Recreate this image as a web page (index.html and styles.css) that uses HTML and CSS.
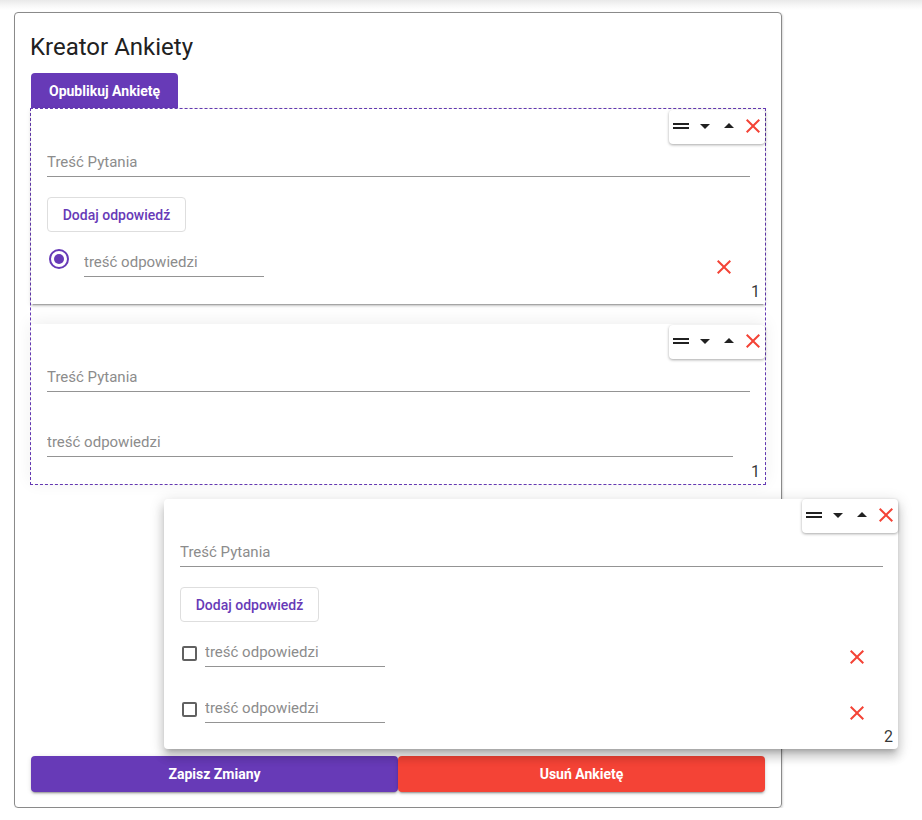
FILE: index.html
```html
<!DOCTYPE html>
<html lang="pl">
<head>
<meta charset="utf-8">
<title>Kreator Ankiety</title>
<link rel="stylesheet" href="styles.css">
</head>
<body>
<div class="topshade"></div>
<div class="panel">
  <h1 class="title">Kreator Ankiety</h1>
  <button class="publish">Opublikuj Ankietę</button>
  <div class="dropzone">
    <div class="qcard">
      <div class="tools">
        <svg class="ic" viewBox="0 0 24 24"><path d="M20 9H4v2h16V9zM4 15h16v-2H4v2z"/></svg>
        <svg class="ic" viewBox="0 0 24 24"><path d="M7 10l5 5 5-5z"/></svg>
        <svg class="ic" viewBox="0 0 24 24"><path d="M7 14l5-5 5 5z"/></svg>
        <svg class="ic red" viewBox="0 0 24 24"><path d="M19 6.41L17.59 5 12 10.59 6.41 5 5 6.41 10.59 12 5 17.59 6.41 19 12 13.41 17.59 19 19 17.59 13.41 12z"/></svg>
      </div>
      <input class="field" placeholder="Treść Pytania">
      <button class="add">Dodaj odpowiedź</button>
      <div class="answer first">
        <span class="radio"><span class="dot"></span></span>
        <input class="field short radio-gap" placeholder="treść odpowiedzi">
        <svg class="ic red del" viewBox="0 0 24 24"><path d="M19 6.41L17.59 5 12 10.59 6.41 5 5 6.41 10.59 12 5 17.59 6.41 19 12 13.41 17.59 19 19 17.59 13.41 12z"/></svg>
      </div>
      <span class="num">1</span>
    </div>
    <div class="qcard ghost">
      <div class="tools">
        <svg class="ic" viewBox="0 0 24 24"><path d="M20 9H4v2h16V9zM4 15h16v-2H4v2z"/></svg>
        <svg class="ic" viewBox="0 0 24 24"><path d="M7 10l5 5 5-5z"/></svg>
        <svg class="ic" viewBox="0 0 24 24"><path d="M7 14l5-5 5 5z"/></svg>
        <svg class="ic red" viewBox="0 0 24 24"><path d="M19 6.41L17.59 5 12 10.59 6.41 5 5 6.41 10.59 12 5 17.59 6.41 19 12 13.41 17.59 19 19 17.59 13.41 12z"/></svg>
      </div>
      <input class="field" placeholder="Treść Pytania">
      <input class="field text-answer" placeholder="treść odpowiedzi">
      <span class="num">1</span>
    </div>
  </div>
  <div class="actions">
    <button class="save">Zapisz Zmiany</button>
    <button class="remove">Usuń Ankietę</button>
  </div>
</div>

<div class="qcard dragging">
  <div class="tools">
    <svg class="ic" viewBox="0 0 24 24"><path d="M20 9H4v2h16V9zM4 15h16v-2H4v2z"/></svg>
    <svg class="ic" viewBox="0 0 24 24"><path d="M7 10l5 5 5-5z"/></svg>
    <svg class="ic" viewBox="0 0 24 24"><path d="M7 14l5-5 5 5z"/></svg>
    <svg class="ic red" viewBox="0 0 24 24"><path d="M19 6.41L17.59 5 12 10.59 6.41 5 5 6.41 10.59 12 5 17.59 6.41 19 12 13.41 17.59 19 19 17.59 13.41 12z"/></svg>
  </div>
  <input class="field" placeholder="Treść Pytania">
  <button class="add">Dodaj odpowiedź</button>
  <div class="answer first">
    <span class="check"></span>
    <input class="field short check-gap" placeholder="treść odpowiedzi">
    <svg class="ic red del" viewBox="0 0 24 24"><path d="M19 6.41L17.59 5 12 10.59 6.41 5 5 6.41 10.59 12 5 17.59 6.41 19 12 13.41 17.59 19 19 17.59 13.41 12z"/></svg>
  </div>
  <div class="answer next">
    <span class="check"></span>
    <input class="field short check-gap" placeholder="treść odpowiedzi">
    <svg class="ic red del" viewBox="0 0 24 24"><path d="M19 6.41L17.59 5 12 10.59 6.41 5 5 6.41 10.59 12 5 17.59 6.41 19 12 13.41 17.59 19 19 17.59 13.41 12z"/></svg>
  </div>
  <span class="num">2</span>
</div>
</body>
</html>
```

FILE: styles.css
```css
* { box-sizing: border-box; }

body {
  margin: 0;
  font-family: Roboto, "Noto Sans", sans-serif;
  background: #fff;
  color: #212121;
  position: relative;
}

.topshade {
  height: 12px;
  background: linear-gradient(#e9e9e9, #f8f8f8 6px, #fff 10px);
}

.panel {
  margin-left: 14px;
  width: 768px;
  border: 1px solid #8a8a8a;
  border-radius: 4px;
  box-shadow: 1px 1px 2px rgba(0,0,0,0.15);
  padding: 20px 15px 15px;
  display: flex;
  flex-direction: column;
  align-items: flex-start;
}

.title {
  margin: 0;
  font-size: 24px;
  line-height: 28px;
  font-weight: 400;
  color: #212121;
}

button {
  font-family: Roboto, "Noto Sans", sans-serif;
  cursor: pointer;
}

.publish {
  margin: 12px 0 0 1px;
  height: 35px;
  padding: 0 18px;
  border: none;
  border-radius: 4px 4px 0 0;
  background: #673ab7;
  color: #fff;
  font-size: 14px;
  font-weight: 700;
}

.dropzone {
  width: 736px;
  border: 1px dashed #673ab7;
  display: flex;
  flex-direction: column;
}

.qcard {
  position: relative;
  background: #fff;
  padding: 38px 15px 27px 16px;
  display: flex;
  flex-direction: column;
  align-items: flex-start;
  box-shadow: 0 3px 1px -2px rgba(0,0,0,.2), 0 2px 2px 0 rgba(0,0,0,.14), 0 1px 5px 0 rgba(0,0,0,.12);
}

.qcard.ghost {
  margin-top: 20px;
  box-shadow: 0 -2px 16px rgba(0,0,0,0.07);
}

.qcard.dragging {
  position: absolute;
  left: 164px;
  top: 499px;
  width: 734px;
  padding-bottom: 26px;
  border-radius: 4px;
  box-shadow: 0 5px 5px -3px rgba(0,0,0,.2), 0 8px 10px 1px rgba(0,0,0,.14), 0 3px 14px 2px rgba(0,0,0,.12);
}

.tools {
  position: absolute;
  top: 1px;
  right: 0;
  display: flex;
  padding: 4px 0 6px;
  background: #fff;
  border-radius: 4px;
  box-shadow: 0 1px 3px rgba(0,0,0,0.35);
}

.dragging .tools { top: 0; }

.ic {
  width: 24px;
  height: 24px;
  display: block;
  fill: rgba(0,0,0,0.87);
  flex: none;
}

.ic.red { fill: #f44336; }

.field {
  display: block;
  height: 30px;
  width: 100%;
  padding: 0;
  border: none;
  border-bottom: 1px solid #949494;
  outline: none;
  font-family: Roboto, "Noto Sans", sans-serif;
  font-size: 15px;
  color: #212121;
  background: transparent;
}

.field::placeholder { color: #8c8c8c; }

.field.short { width: 180px; }

.field.text-answer {
  width: 686px;
  margin-top: 35px;
}

.add {
  margin-top: 20px;
  height: 35px;
  width: 139px;
  padding: 0;
  background: #fff;
  border: 1px solid #dedede;
  border-radius: 4px;
  color: #673ab7;
  font-size: 14px;
  font-weight: 500;
}

.answer {
  display: flex;
  align-items: flex-start;
  height: 30px;
  width: 100%;
}

.answer.first { margin-top: 15px; }
.answer.next { margin-top: 26px; }

.radio {
  margin: 2px 0 0 2px;
  width: 20px;
  height: 20px;
  border: 2px solid #673ab7;
  border-radius: 50%;
  display: flex;
  align-items: center;
  justify-content: center;
  flex: none;
}

.radio .dot {
  width: 10px;
  height: 10px;
  border-radius: 50%;
  background: #673ab7;
}

.radio-gap { margin-left: 15px; }

.check {
  margin: 9px 0 0 2px;
  width: 15px;
  height: 15px;
  border: 2px solid #616161;
  border-radius: 2px;
  flex: none;
}

.check-gap { margin-left: 8px; }

.del {
  margin: 8px 14px 0 auto;
}

.num {
  position: absolute;
  right: 5px;
  bottom: 4px;
  font-size: 16px;
  line-height: 16px;
  color: rgba(0,0,0,0.8);
}

.actions {
  display: flex;
  width: 734px;
  margin: 271px 0 0 1px;
}

.actions button {
  flex: 1;
  height: 36px;
  border: none;
  border-radius: 4px;
  color: #fff;
  font-size: 14px;
  font-weight: 700;
  box-shadow: 0 3px 1px -2px rgba(0,0,0,.2), 0 2px 2px 0 rgba(0,0,0,.14), 0 1px 5px 0 rgba(0,0,0,.12);
}

.save { background: #673ab7; }
.remove { background: #f44336; }
```
